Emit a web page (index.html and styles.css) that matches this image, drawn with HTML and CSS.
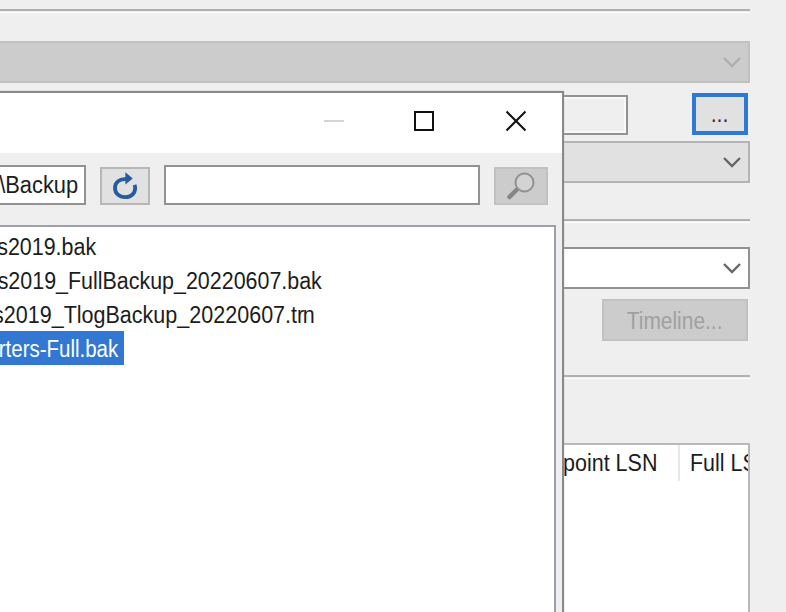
FILE: index.html
```html
<!DOCTYPE html>
<html lang="en">
<head>
<meta charset="utf-8">
<title>Restore Database</title>
<link rel="stylesheet" href="styles.css">
</head>
<body>
<main class="restore">
  <hr class="rule">
  <div class="combo combo-disabled"><svg class="chevron" viewBox="0 0 18 12"><path d="M1 2 9 10 17 2"/></svg></div>
  <div class="device">
    <div class="device-box"></div>
    <button class="browse"><span class="label">...</span></button>
  </div>
  <div class="combo combo-button"><svg class="chevron" viewBox="0 0 18 12"><path d="M1 2 9 10 17 2"/></svg></div>
  <hr class="rule rule-destination">
  <div class="combo combo-edit"><svg class="chevron" viewBox="0 0 18 12"><path d="M1 2 9 10 17 2"/></svg></div>
  <button class="timeline" disabled><span class="label">Timeline...</span></button>
  <hr class="rule rule-plan">
  <div class="grid">
    <div class="column column-point"><span class="label">point LSN</span></div>
    <div class="column column-full"><span class="label">Full LSN</span></div>
  </div>
</main>
<section class="dialog">
  <header class="titlebar">
    <svg class="minimize" viewBox="0 0 22 22"><path d="M1 11H21"/></svg>
    <svg class="maximize" viewBox="0 0 22 22"><path d="M2 2H20V20H2Z"/></svg>
    <svg class="close" viewBox="0 0 22 22"><path d="M1.5 1.5 20.5 20.5M20.5 1.5 1.5 20.5"/></svg>
  </header>
  <div class="toolbar">
    <div class="path"><span class="label">\Backup</span></div>
    <button class="refresh"><svg viewBox="0 0 28 30"><path class="arc" d="M15 8.2C8 7.6 4 11.8 4 17C4 22.6 8.5 26.2 14 26.2C19.8 26.2 24.2 22.6 24.2 17Q24.2 15.4 23.6 13.8"/><path class="arrow" d="M14.4 1.2 21.8 7.6 14.4 13.6Z"/></svg></button>
    <input class="search" type="text" aria-label="Search">
    <button class="find" disabled><svg viewBox="0 0 30 30"><path class="handle" d="M3.5 26 11 18.5"/><circle cx="18.5" cy="11.5" r="9"/></svg></button>
  </div>
  <div class="files">
    <div class="file file-a"><span class="label">s2019.bak</span></div>
    <div class="file file-b"><span class="label">s2019_FullBackup_20220607.bak</span></div>
    <div class="file file-c"><span class="label">s2019_TlogBackup_20220607.t<span class="kern">r</span>n</span></div>
    <div class="file file-d"><span class="label">rters-Full.bak</span></div>
  </div>
</section>
</body>
</html>
```
FILE: styles.css
```css
* { box-sizing: border-box; }
body {
  margin: 0;
  width: 786px;
  height: 612px;
  overflow: hidden;
  position: relative;
  background: #efefef;
  color: #1c1c1c;
  font: 23px/28px "Liberation Sans", Arial, sans-serif;
}
button { padding: 0; border-radius: 0; font: inherit; }
svg { display: block; fill: none; }
.label { display: inline-block; flex: none; white-space: pre; transform: scaleX(.932); }

.restore { display: flex; flex-direction: column; width: 750px; height: 612px; padding-top: 9px; }
.rule { flex: none; width: 100%; height: 4px; margin: 0; border: 0; border-top: 2px solid #b0b0b0; border-bottom: 1px solid #fff; }
.rule-destination { margin-top: 36px; }
.rule-plan { margin-top: 34px; }
.combo { flex: none; display: flex; justify-content: flex-end; align-items: center; height: 42px; padding-right: 7px; border: 2px solid; border-left: 0; }
.chevron { width: 18px; height: 12px; stroke: #666; stroke-width: 2.4; }
.combo-disabled { margin-top: 28px; background: #ccc; border-color: #c1c1c1; }
.combo-disabled .chevron { stroke: #aeaeae; }
.combo-button { margin-top: 6px; background: #e1e1e1; border-color: #b4b4b4; }
.combo-edit { margin-top: 24px; background: #fff; border-color: #929292; }
.device { display: flex; justify-content: space-between; margin-top: 10px; padding-right: 2px; }
.device-box { width: 628px; height: 40px; margin-top: 2px; border: 2px solid #929292; box-shadow: inset 0 0 0 2px #f9f9f9; }
.browse { width: 56px; height: 42px; border: 4px solid #2f79d5; background: #e1e1e1; color: #333; }
.timeline { align-self: flex-end; width: 146px; height: 42px; margin: 10px 2px 0 0; padding-top: 2px; border: 2px solid #c1c1c1; background: #ccc; color: #a0a0a0; }
.timeline .label { transform: scaleX(.91); }
.grid { display: flex; flex: 1; justify-content: flex-end; margin-top: 64px; border: 2px solid #b9b9bd; border-width: 2px 2px 0 0; background: #fff; overflow: hidden; }
.column { height: 36px; padding-top: 4px; overflow: hidden; }
.column-point { width: 117px; border-right: 2px solid #e7e7e7; }
.column-full { width: 68px; padding-left: 10px; }
.grid .label { transform-origin: left; }
.column-point .label { transform: scaleX(.935); }

.dialog { position: absolute; left: 0; top: 91px; width: 564px; height: 521px; display: flex; flex-direction: column; border: solid #898989; border-width: 2px 2px 0 0; background: #efefef; box-shadow: 0 0 1px #aaa; }
.titlebar { display: flex; justify-content: flex-end; align-items: center; gap: 70px; height: 60px; padding: 0 35px 5px 0; background: #fff; }
.titlebar svg { width: 22px; height: 22px; stroke: #111; stroke-width: 2; }
.titlebar .minimize { stroke: #d4d4d4; margin-right: -2px; }
.toolbar { display: flex; height: 40px; margin-top: 12px; }
.path { display: flex; justify-content: flex-end; width: 86px; height: 40px; padding: 4px 6px 0 0; border: 2px solid #929292; border-left: 0; background: #fff; }
.path .label, .file .label { transform-origin: right; }
.path .label { transform: scaleX(.95); }
.refresh { display: flex; align-items: center; justify-content: center; width: 50px; height: 38px; margin: 2px 0 0 14px; border: 2px solid #b7b7b7; background: #e1e1e1; }
.refresh svg { width: 28px; height: 30px; }
.arc { stroke: #265b9f; stroke-width: 3.8; }
.arrow { fill: #265b9f; }
.search { width: 316px; height: 40px; margin: 0 14px; padding: 0 6px; border: 2px solid #929292; border-radius: 0; background: #fff; font: inherit; }
.find { display: flex; align-items: center; justify-content: center; width: 54px; height: 38px; margin-top: 2px; border: 2px solid #c1c1c1; background: #ccc; }
.find svg { width: 30px; height: 30px; stroke: #919191; stroke-width: 2; }
.find circle { fill: #d3d3d3; }
.find .handle { stroke: #858585; stroke-width: 4.5; stroke-linecap: round; }
.files { flex: 1; width: 556px; margin-top: 20px; padding-top: 2px; border: solid #9da0a8; border-width: 2px 2px 0 0; background: #fff; }
.file { display: flex; justify-content: flex-end; align-items: center; height: 34px; padding: 2px 6px 0 0; overflow: hidden; }
.file-a { width: 102px; }
.file-b { width: 328px; }
.file-c { width: 321px; }
.file-c .label { transform: scaleX(.936); }
.kern { letter-spacing: -1.5px; }
.file-d { width: 124px; background: #3277d2; color: #fff; }
.file-d .label { transform: scaleX(.89); }
```
